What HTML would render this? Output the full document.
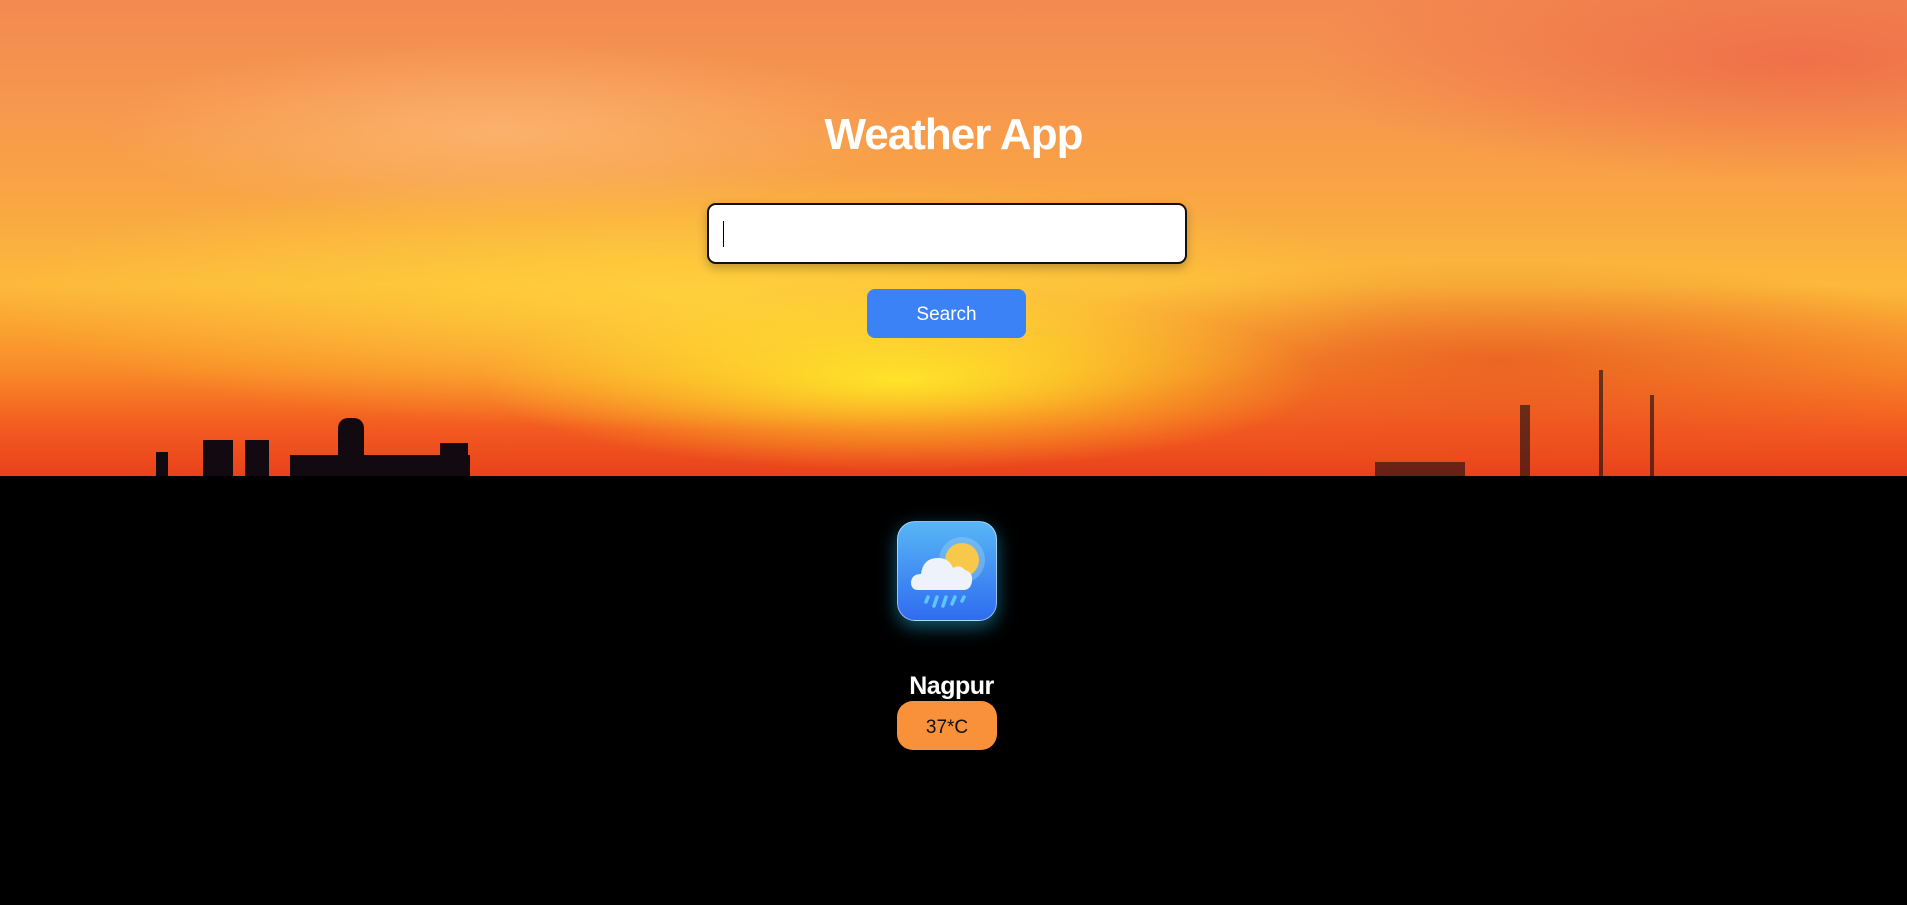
<!DOCTYPE html>
<html><head><meta charset="utf-8"><style>
*{margin:0;padding:0;box-sizing:border-box}
html,body{width:1907px;height:905px;background:#000;overflow:hidden;font-family:"Liberation Sans",sans-serif}
.sky{position:absolute;left:0;top:0;width:1907px;height:476px;overflow:hidden;
background:
radial-gradient(ellipse 420px 90px at 900px 380px,rgba(255,240,40,.85),rgba(255,220,40,0) 100%),
radial-gradient(ellipse 700px 130px at 700px 300px,rgba(255,215,60,.8),rgba(255,200,70,0) 100%),
radial-gradient(ellipse 500px 100px at 1500px 360px,rgba(220,60,30,.5),rgba(220,60,30,0) 100%),
radial-gradient(ellipse 400px 90px at 500px 130px,rgba(255,200,140,.5),rgba(255,200,150,0) 100%),
radial-gradient(ellipse 500px 120px at 1800px 60px,rgba(235,90,70,.6),rgba(235,100,80,0) 100%),
linear-gradient(180deg,#f38a50 0%,#f6964f 20%,#f9a445 40%,#fcb93a 60%,#f98a28 78%,#f35a20 90%,#e8421c 100%);}
.b{position:absolute;background:#120a10}
h1{position:absolute;top:110px;left:0;width:1907px;text-align:center;color:#fff;font-size:44px;font-weight:bold;letter-spacing:-1px}
.inp{position:absolute;left:707px;top:203px;width:480px;height:61px;background:#fff;border:2px solid #111;border-radius:9px;box-shadow:0 4px 10px rgba(0,0,0,.25)}
.inp i{position:absolute;left:14px;top:16px;width:1px;height:26px;background:#000}
.btn{position:absolute;left:867px;top:289px;width:159px;height:49px;background:#3b82f6;border-radius:8px;color:#fff;font-size:19px;text-align:center;line-height:52px}
.icon{position:absolute;left:897px;top:521px;width:100px;height:100px;border-radius:18px;background:linear-gradient(180deg,#58b6f6,#2f6cf0);box-shadow:0 6px 18px rgba(40,200,255,.45);border:1px solid rgba(255,255,255,.5)}
.city{position:absolute;top:672px;left:0;width:1907px;text-align:center;color:#fff;font-size:25px;font-weight:bold;letter-spacing:-.5px;padding-right:4px}
.temp{position:absolute;left:897px;top:701px;width:100px;height:49px;background:#f9913a;border-radius:16px;text-align:center;line-height:54px;font-size:19px;color:#111}
</style></head><body>
<div class="sky">
<div class="b" style="left:156px;top:452px;width:12px;height:30px"></div>
<div class="b" style="left:203px;top:440px;width:30px;height:40px"></div>
<div class="b" style="left:245px;top:440px;width:24px;height:40px"></div>
<div class="b" style="left:290px;top:455px;width:180px;height:25px"></div>
<div class="b" style="left:338px;top:418px;width:26px;height:60px;border-radius:10px 10px 0 0"></div>
<div class="b" style="left:440px;top:443px;width:28px;height:40px"></div>
<div class="b" style="left:1375px;top:462px;width:90px;height:20px;opacity:.6"></div>
<div class="b" style="left:1520px;top:405px;width:10px;height:75px;opacity:.6"></div>
<div class="b" style="left:1599px;top:370px;width:4px;height:110px;opacity:.6"></div>
<div class="b" style="left:1650px;top:395px;width:4px;height:85px;opacity:.6"></div>
</div>
<h1>Weather App</h1>
<div class="inp"><i></i></div>
<div class="btn">Search</div>
<div class="icon"><svg width="100" height="100" viewBox="0 0 100 100">
<circle cx="64" cy="38" r="23" fill="#9fd3f0" opacity=".4"/>
<circle cx="64" cy="38" r="17" fill="#f7c84a"/>
<path d="M20 68 Q13 68 13 60 Q14 52 23 52 Q25 36 40 36 Q51 36 55 46 Q62 42 67 48 Q75 50 74 59 Q73 68 65 68 Z" fill="#eef3fb"/>
<g stroke="#5cc8f5" stroke-width="3.5" stroke-linecap="round">
<line x1="30" y1="75" x2="28" y2="80"/><line x1="39" y1="75" x2="36" y2="84"/><line x1="48" y1="75" x2="45" y2="84"/><line x1="57" y1="75" x2="54" y2="82"/><line x1="66" y1="75" x2="64" y2="79"/></g>
</svg></div>
<div class="city">Nagpur</div>
<div class="temp">37*C</div>
</body></html>
